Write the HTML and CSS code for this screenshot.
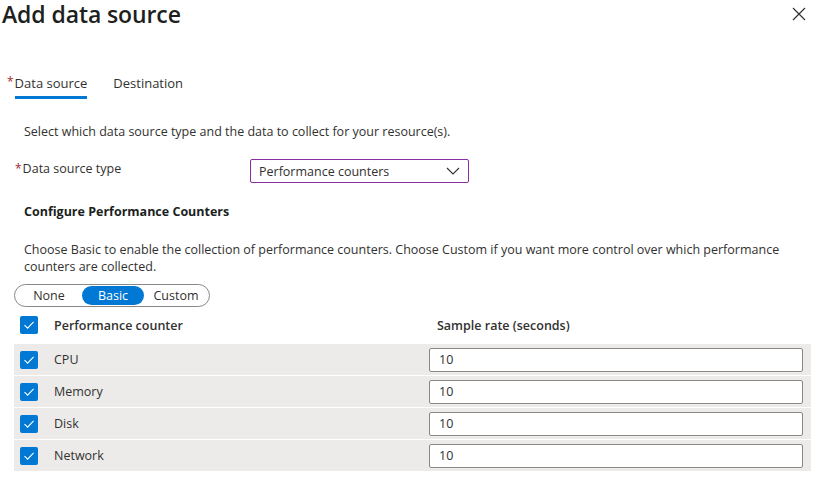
FILE: index.html
```html
<!DOCTYPE html>
<html>
<head>
<meta charset="utf-8">
<link rel="stylesheet" href="styles.css">
</head>
<body>
<div class="panel">
  <header class="head">
    <h1 class="title">Add data source</h1>
    <button class="close" aria-label="Close">
      <svg width="14" height="14" viewBox="0 0 14 14"><path d="M1 1L13 13M13 1L1 13" stroke="#323130" stroke-width="1.2" fill="none"/></svg>
    </button>
  </header>
  <nav class="tabs">
    <div class="tab active"><span class="req">*</span><span class="tab-label">Data source</span></div>
    <div class="tab"><span class="tab-label">Destination</span></div>
  </nav>
  <div class="content">
    <p class="intro">Select which data source type and the data to collect for your resource(s).</p>
    <div class="field">
      <label class="field-label"><span class="req">*</span>Data source type</label>
      <div class="select">
        <span>Performance counters</span>
        <svg width="14" height="8" viewBox="0 0 14 8"><path d="M1 1L7 7L13 1" stroke="#323130" stroke-width="1.1" fill="none"/></svg>
      </div>
    </div>
    <h2 class="section">Configure Performance Counters</h2>
    <p class="desc">Choose Basic to enable the collection of performance counters. Choose Custom if you want more control over which performance counters are collected.</p>
  </div>
  <div class="toggle">
    <span class="opt">None</span>
    <span class="opt sel">Basic</span>
    <span class="opt">Custom</span>
  </div>
  <div class="grid">
    <div class="row header">
      <span class="cb"><svg viewBox="0 0 18 18"><path d="M4.5 9.2L7.6 12.2L13.6 5.8" stroke="#fff" stroke-width="1.1" fill="none"/></svg></span>
      <span class="name">Performance counter</span>
      <span class="rate">Sample rate (seconds)</span>
    </div>
    <div class="row item">
      <span class="cb"><svg viewBox="0 0 18 18"><path d="M4.5 9.2L7.6 12.2L13.6 5.8" stroke="#fff" stroke-width="1.1" fill="none"/></svg></span>
      <span class="name">CPU</span>
      <span class="input">10</span>
    </div>
    <div class="row item">
      <span class="cb"><svg viewBox="0 0 18 18"><path d="M4.5 9.2L7.6 12.2L13.6 5.8" stroke="#fff" stroke-width="1.1" fill="none"/></svg></span>
      <span class="name">Memory</span>
      <span class="input">10</span>
    </div>
    <div class="row item">
      <span class="cb"><svg viewBox="0 0 18 18"><path d="M4.5 9.2L7.6 12.2L13.6 5.8" stroke="#fff" stroke-width="1.1" fill="none"/></svg></span>
      <span class="name">Disk</span>
      <span class="input">10</span>
    </div>
    <div class="row item">
      <span class="cb"><svg viewBox="0 0 18 18"><path d="M4.5 9.2L7.6 12.2L13.6 5.8" stroke="#fff" stroke-width="1.1" fill="none"/></svg></span>
      <span class="name">Network</span>
      <span class="input">10</span>
    </div>
  </div>
</div>
</body>
</html>
```
FILE: styles.css
```css
* { box-sizing: border-box; }
html, body { margin: 0; padding: 0; background: #fff; }
body {
  font-family: "Open Sans", "Noto Sans", "Liberation Sans", sans-serif;
  font-size: 12.5px;
  color: #323130;
  width: 820px;
  height: 490px;
  overflow: hidden;
}
.panel { padding: 0 9px 0 14px; }
.head {
  display: flex;
  justify-content: space-between;
  align-items: flex-start;
  margin-left: -12px;
  height: 60px;
}
.title {
  margin: 0;
  padding-top: 2px;
  font-size: 23px;
  font-weight: 600;
  line-height: 24px;
  color: #201f1e;
  letter-spacing: -0.1px;
}
.close {
  border: 0;
  background: none;
  padding: 0;
  margin: 7px 5px 0 0;
  width: 14px;
  height: 14px;
  display: flex;
}
.tabs { display: flex; gap: 26px; margin-top: 13px; margin-left: -7px; }
.tab { display: flex; height: 27px; }
.tab .tab-label { line-height: 20px; font-size: 13px; }
.tab.active .tab-label { border-bottom: 3px solid #0078d4; height: 26px; }
.req { color: #a4262c; font-size: 12px; margin-right: 1px; line-height: 17px; }
.content { padding-left: 10px; }
.intro { margin: 23px 0 0; line-height: 18px; }
.field { display: flex; align-items: flex-start; margin-top: 19px; margin-left: -9px; }
.field-label { width: 235px; line-height: 17px; }
.select {
  width: 219px;
  height: 24px;
  border: 1px solid #8a2da5;
  border-radius: 2px;
  display: flex;
  align-items: center;
  justify-content: space-between;
  padding: 0 8px 0 8px;
  margin-top: -1px;
}
.section { font-size: 12.5px; font-weight: 700; margin: 20px 0 0; line-height: 18px; color: #201f1e; }
.desc { margin: 20px 0 0; line-height: 17px; padding-right: 20px; }
.toggle {
  margin-top: 9px;
  display: flex;
  align-items: center;
  width: 196px;
  height: 23px;
  border: 1px solid #8a8886;
  border-radius: 12px;
  padding: 0 1px;
}
.opt { line-height: 19px; text-align: center; }
.opt:first-child { width: 66px; }
.opt.sel { width: 62px; background: #0078d4; color: #fff; border-radius: 10px; }
.opt:last-child { width: 64px; }
.grid { margin-top: 5px; width: 797px; }
.row { display: flex; align-items: center; height: 31px; }
.row.header { height: 26px; }
.row.item { background: #edebe9; margin-top: 1px; }
.row.header + .row.item { margin-top: 6px; }
.cb {
  width: 18px; height: 18px; border-radius: 2px; background: #0078d4;
  margin-left: 6px; display: flex;
}
.cb svg { width: 18px; height: 18px; }
.name { margin-left: 16px; width: 375px; }
.row.header .name, .rate { font-weight: 600; color: #323130; }
.rate { margin-left: 8px; }
.input {
  width: 374px; height: 24px;
  background: #fff;
  border: 1px solid #8a8886;
  border-radius: 2px;
  padding-left: 9px;
  line-height: 22px;
}
```
